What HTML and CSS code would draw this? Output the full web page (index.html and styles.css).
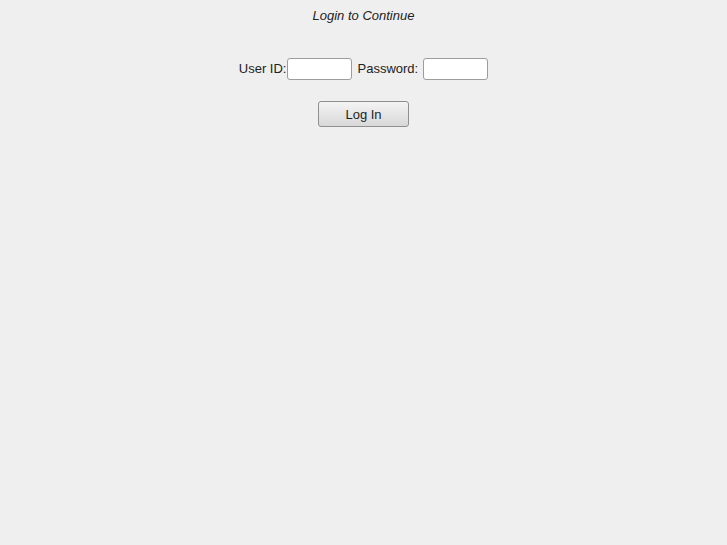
FILE: index.html
```html
<!DOCTYPE html>
<html>
<head>
<meta charset="utf-8">
<title>Login</title>
<link rel="stylesheet" href="styles.css">
</head>
<body>
<div class="panel">
  <div class="title">Login to Continue</div>
  <form class="row">
    <label class="lbl lbl-user" for="uid">User ID:</label>
    <input class="field" id="uid" type="text">
    <label class="lbl lbl-pass" for="pw">Password:</label>
    <input class="field" id="pw" type="password">
  </form>
  <button class="btn" type="button">Log In</button>
</div>
</body>
</html>
```
FILE: styles.css
```css
html, body {
  margin: 0;
  padding: 0;
  background: #efefef;
  height: 100%;
}
body {
  font-family: "Liberation Sans", Arial, sans-serif;
  font-size: 13px;
  color: #222222;
}
.panel {
  display: flex;
  flex-direction: column;
  align-items: center;
  padding-top: 8px;
}
.title {
  font-style: italic;
  line-height: 15px;
  height: 15px;
}
.row {
  display: flex;
  align-items: center;
  margin: 35px 0 0 0;
  height: 22px;
}
.lbl {
  line-height: 15px;
  padding-bottom: 2px;
}
.lbl-user {
  margin-right: 1px;
}
.lbl-pass {
  margin-left: 5px;
  margin-right: 5px;
}
.field {
  box-sizing: border-box;
  width: 65px;
  height: 22px;
  margin: 0;
  padding: 0 3px;
  border: 1px solid #9c9c9c;
  border-radius: 3px;
  background: #ffffff;
  font: inherit;
  outline: none;
}
.btn {
  box-sizing: border-box;
  margin-top: 21px;
  width: 91px;
  height: 26px;
  padding: 0;
  border: 1px solid #8f8f8f;
  border-radius: 3px;
  background: linear-gradient(to bottom, #f4f4f4 0%, #e6e6e6 50%, #d8d8d8 100%);
  font-family: "Liberation Sans", Arial, sans-serif;
  font-size: 13px;
  color: #1e1e1e;
  line-height: 15px;
}
```
